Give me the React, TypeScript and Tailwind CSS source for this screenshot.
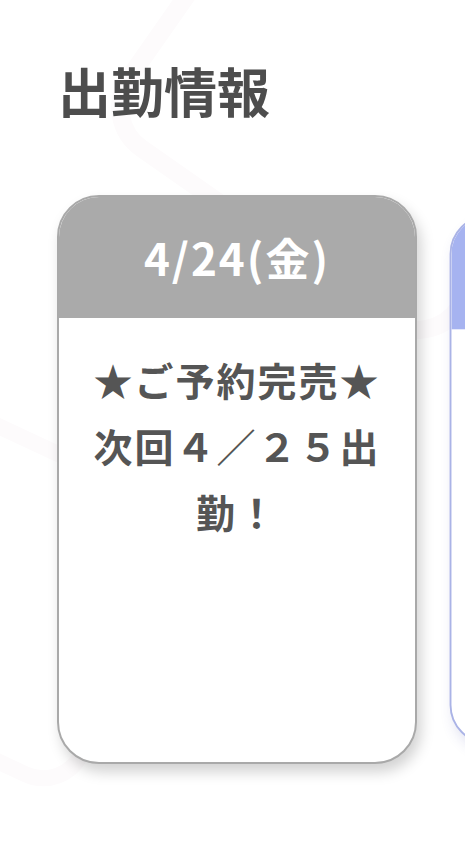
import React from "react";

const font = { fontFamily: '"Noto Sans CJK JP", "Noto Sans", sans-serif' };

export default function App() {
  return (
    <div className="relative w-[465px] h-[853px] overflow-hidden bg-white" style={font}>
      <div className="pointer-events-none absolute inset-0">
        <div className="absolute left-[170px] top-[-140px] w-[420px] h-[420px] rotate-[35deg] rounded-[60px] border-[18px] border-[#fdfbfc]" />
        <div className="absolute left-[-170px] top-[430px] w-[320px] h-[320px] rotate-[25deg] rounded-[50px] border-[16px] border-[#fdfbfc]" />
      </div>
      <div className="relative pt-[57px]">
        <h1 className="pl-[58px] text-[53px] leading-[66px] font-bold text-[#4d4d4d]">出勤情報</h1>
        <div className="mt-[72px] flex gap-[20px] pl-[57px]">
          <div className="shrink-0 w-[360px] h-[569px] rounded-[42px] border-2 border-[#a9a9a9] bg-white overflow-hidden shadow-[4px_8px_14px_rgba(0,0,0,0.18)] flex flex-col">
            <div className="h-[121px] bg-[#aaaaaa] flex items-center justify-center">
              <span className="text-white text-[44px] font-bold leading-none tracking-[2px] pb-[2px]">4/24(金)</span>
            </div>
            <div className="px-[20px] pt-[28px] text-center text-[#555555] text-[39px] font-bold leading-[66px] tracking-[2px]">
              ★ご予約完売★<br />次回４／２５出勤！
            </div>
          </div>
          <div className="shrink-0 w-[360px] h-[569px] scale-[0.93] rounded-[42px] border-2 border-[#aab3e6] bg-white overflow-hidden shadow-[4px_8px_14px_rgba(60,70,160,0.15)] flex flex-col">
            <div className="h-[121px] bg-[#a6b3f0]" />
          </div>
        </div>
      </div>
    </div>
  );
}
